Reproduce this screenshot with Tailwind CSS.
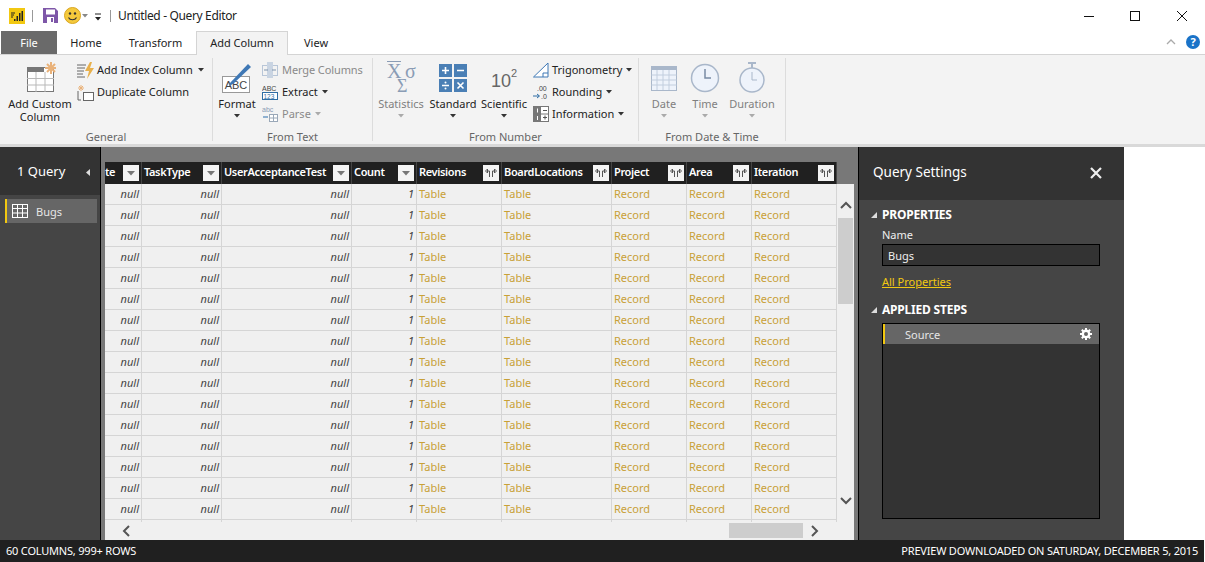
<!DOCTYPE html>
<html lang="en">
<head>
  <meta charset="UTF-8" />
  <title>Untitled - Query Editor</title>
  <script src="https://cdn.jsdelivr.net/npm/@tailwindcss/browser@4"></script>
</head>
<body class="bg-white text-[#222] font-['Noto_Sans',sans-serif] text-[11px] overflow-hidden">
  <div class="w-[1205px] h-[562px] flex flex-col overflow-hidden">

    <!-- Title bar -->
    <div class="h-[31px] flex items-center shrink-0">
      <svg class="ml-[9px]" width="16" height="16" viewBox="0 0 16 16"><rect width="16" height="16" fill="#f2c811"/><path d="M5 11h1.500v2H5zM7.500 8H9v5H7.500zM10 5h1.500v8H10zM12.500 3H14v10h-1.500z" fill="#222"/><path d="M2 5h4M2 7h3M2 9h2" stroke="#222"/></svg>
      <div class="ml-[7px] w-px h-[12px] bg-[#999]"></div>
      <svg class="ml-[10px]" width="15" height="15" viewBox="0 0 15 15"><path d="M0 0h12l3 3v12H0z" fill="#7e57a8"/><rect x="3" y="1.500" width="9" height="5" fill="#fff"/><rect x="4" y="9" width="7" height="6" fill="#fff"/><rect x="8" y="10" width="2" height="4" fill="#7e57a8"/></svg>
      <svg class="ml-[6px]" width="17" height="17" viewBox="0 0 17 17"><circle cx="8.500" cy="8.500" r="8" fill="#f4c93c" stroke="#d9a520"/><circle cx="6" cy="6.500" r="1.200" fill="#333"/><circle cx="11" cy="6.500" r="1.200" fill="#333"/><path d="M4.500 10.500c1.500 3 6.500 3 8 0" fill="none" stroke="#333" stroke-width="1.200"/></svg>
      <svg class="ml-px" width="6" height="4" viewBox="0 0 6 4"><path d="M0 0h6L3 3.500z" fill="#888"/></svg>
      <svg class="ml-[6px] mt-[2px]" width="8" height="8" viewBox="0 0 8 8"><path d="M1 1h6" stroke="#222"/><path d="M1 4h6L4 7.500z" fill="#222"/></svg>
      <div class="ml-[8px] w-px h-[12px] bg-[#999]"></div>
      <span class="ml-[7px] mt-[1px] text-[12px] tracking-[-0.35px]">Untitled - Query Editor</span>
      <div class="ml-auto flex items-center">
        <svg width="12" height="12" viewBox="0 0 12 12"><path d="M1 6.500h10" stroke="#111"/></svg>
        <svg class="ml-[34px]" width="12" height="12" viewBox="0 0 12 12"><rect x="1.500" y="1.500" width="9" height="9" fill="none" stroke="#111"/></svg>
        <svg class="ml-[35px] mr-[17px]" width="12" height="12" viewBox="0 0 12 12"><path d="M1 1l10 10M11 1L1 11" stroke="#111"/></svg>
      </div>
    </div>

    <!-- Tabs -->
    <div class="h-[24px] flex items-stretch shrink-0 pl-px border-b border-[#d4d4d4] text-[11px]">
      <div class="w-[56px] h-[23px] pt-[1px] bg-[#6a6a6a] text-white flex items-center justify-center">File</div>
      <div class="w-[58px] pt-[1px] flex items-center justify-center">Home</div>
      <div class="w-[81px] pt-[1px] flex items-center justify-center">Transform</div>
      <div class="w-[92px] h-[24px] bg-[#f3f3f3] border border-b-0 border-[#d4d4d4] flex items-center justify-center">Add Column</div>
      <div class="w-[56px] pt-[1px] flex items-center justify-center">View</div>
      <div class="ml-auto flex items-center pb-[1px] pr-[5px]">
        <svg width="10" height="6" viewBox="0 0 10 6"><path d="M1 5l4-4 4 4" fill="none" stroke="#aaa" stroke-width="1.300"/></svg>
        <div class="ml-[10px] w-[14px] h-[14px] rounded-full bg-[#1a73c8] text-white font-bold text-[11px] leading-[14px] text-center">?</div>
      </div>
    </div>

    <!-- Ribbon -->
    <div class="h-[92px] bg-[#f3f3f3] border-b-[3px] border-[#d9d9d9] flex shrink-0">
      <!-- General -->
      <div class="w-[213px] flex flex-col my-[3px] border-r border-[#dcdcdc]">
        <div class="h-[69px] shrink-0 flex">
          <div class="w-[70px] ml-[5px] flex flex-col items-center pt-[3px]">
            <svg width="32" height="32" viewBox="0 0 32 32"><rect x="3.500" y="6.500" width="26" height="24" fill="#fff" stroke="#777"/><rect x="3" y="6" width="17" height="5" fill="#777"/><path d="M3 17.500h27M3 24h27M12 11v20M21 11v20" stroke="#b9b9b9"/><g stroke="#e9b27a" stroke-width="2"><path d="M27 1v12M21 7h12M23 3l8 8M31 3l-8 8"/></g></svg>
            <div class="mt-[4px] text-center leading-[13px]">Add Custom<br>Column</div>
          </div>
          <div class="ml-[2px] flex flex-col">
            <div class="mt-[1px] h-[22px] flex items-center">
              <svg width="17" height="17" viewBox="0 0 17 17"><path d="M0 3h9M0 6h8M0 9h7M0 12h6M0 15h8" stroke="#666"/><path d="M13 0L8 9h4l-2 8 7-11h-4l2-6z" fill="#e8b04c"/></svg>
              <span class="ml-[3px]">Add Index Column</span>
              <svg class="ml-[5px]" width="6" height="4" viewBox="0 0 6 4"><path d="M0 0h6L3 3.500z" fill="#333"/></svg>
            </div>
            <div class="h-[22px] flex items-center">
              <svg width="17" height="17" viewBox="0 0 17 17"><path d="M1 7v9h3" fill="none" stroke="#666"/><rect x="6.500" y="8.500" width="10" height="8" fill="#fff" stroke="#666"/><g stroke="#e9b27a"><path d="M4 1v6M1 4h6M2 2l4 4M6 2L2 6"/></g></svg>
              <span class="ml-[3px]">Duplicate Column</span>
            </div>
          </div>
        </div>
        <div class="mt-[3px] text-center text-[#666] leading-[14px]">General</div>
      </div>

      <!-- From Text -->
      <div class="w-[160px] flex flex-col my-[3px] border-r border-[#dcdcdc]">
        <div class="h-[69px] shrink-0 flex">
          <div class="w-[48px] flex flex-col items-center pt-[3px]">
            <svg width="32" height="32" viewBox="0 0 32 32"><rect x="1.500" y="15.500" width="27" height="16" fill="#fff" stroke="#999"/><text x="15" y="28" text-anchor="middle" font-size="11" fill="#444" font-family="Liberation Sans">ABC</text><path d="M9 22L27 3l3 3-18 17-4 2z" fill="#3f78b5"/></svg>
            <div class="mt-[4px] leading-[13px]">Format</div>
            <svg class="mt-[4px]" width="6" height="4" viewBox="0 0 6 4"><path d="M0 0h6L3 3.500z" fill="#333"/></svg>
          </div>
          <div class="ml-[1px] flex flex-col">
            <div class="mt-[1px] h-[22px] flex items-center text-[#8a8a8a]">
              <svg width="16" height="16" viewBox="0 0 16 16"><rect x=".5" y="3.500" width="15" height="10" fill="none" stroke="#b8c6d8"/><rect x="5" y="0" width="6" height="16" fill="#c9d4e2"/><path d="M2 8h4M14 8h-4" stroke="#7f94ad"/></svg>
              <span class="ml-[4px] tracking-[-0.1px]">Merge Columns</span>
            </div>
            <div class="h-[22px] flex items-center">
              <svg width="16" height="16" viewBox="0 0 16 16"><text x="0" y="7" font-size="7" fill="#444" font-family="Liberation Sans">ABC</text><rect x="0.500" y="8.500" width="15" height="7" fill="#fff" stroke="#2e6da4"/><text x="1.500" y="14.500" font-size="6.500" fill="#2e6da4" font-family="Liberation Sans">123</text></svg>
              <span class="ml-[4px]">Extract</span>
              <svg class="ml-[4px]" width="6" height="4" viewBox="0 0 6 4"><path d="M0 0h6L3 3.500z" fill="#333"/></svg>
            </div>
            <div class="h-[22px] flex items-center text-[#8a8a8a]">
              <svg width="16" height="16" viewBox="0 0 16 16"><text x="0" y="6" font-size="7" fill="#8a9cb5" font-family="Liberation Sans">abc</text><path d="M1 11h5" stroke="#8fb0d0" stroke-width="2"/><rect x="7.500" y="8.500" width="8" height="7" fill="#fff" stroke="#9aa8b8"/><path d="M7.500 12h8M11.500 8.500v7" stroke="#9aa8b8"/></svg>
              <span class="ml-[4px]">Parse</span>
              <svg class="ml-[4px]" width="6" height="4" viewBox="0 0 6 4"><path d="M0 0h6L3 3.500z" fill="#aaa"/></svg>
            </div>
          </div>
        </div>
        <div class="mt-[3px] text-center text-[#666] leading-[14px]">From Text</div>
      </div>

      <!-- From Number -->
      <div class="w-[266px] flex flex-col my-[3px] border-r border-[#dcdcdc]">
        <div class="h-[69px] shrink-0 flex">
          <div class="w-[52px] ml-[2px] flex flex-col items-center pt-[3px] text-[#7f7f7f]">
            <div class="w-[32px] h-[32px] relative font-['Liberation_Serif',serif] text-[#8a9cb5]">
              <div class="absolute left-[2px] top-0 w-[14px] h-px bg-[#8a9cb5]"></div>
              <span class="absolute left-[2px] top-[2px] text-[20px] leading-[16px]">X</span>
              <span class="absolute left-[20px] top-[3px] text-[20px] leading-[15px]">σ</span>
              <span class="absolute left-[12px] top-[19px] text-[18px] leading-[13px]">Σ</span>
            </div>
            <div class="mt-[4px] leading-[13px]">Statistics</div>
            <svg class="mt-[4px]" width="6" height="4" viewBox="0 0 6 4"><path d="M0 0h6L3 3.500z" fill="#aaa"/></svg>
          </div>
          <div class="w-[52px] flex flex-col items-center pt-[3px]">
            <svg width="32" height="32" viewBox="0 0 32 32"><g fill="#4a7fb5"><rect x="2" y="3" width="13" height="13"/><rect x="17" y="3" width="13" height="13"/><rect x="2" y="18" width="13" height="13"/><rect x="17" y="18" width="13" height="13"/></g><path d="M5 9.500h7M8.500 6v7M20 9.500h7M5 24.500h7M20.500 21.500l6 6M26.500 21.500l-6 6" stroke="#fff" stroke-width="1.600"/><circle cx="8.500" cy="21.500" r="1" fill="#fff"/><circle cx="8.500" cy="27.500" r="1" fill="#fff"/></svg>
            <div class="mt-[4px] leading-[13px]">Standard</div>
            <svg class="mt-[4px]" width="6" height="4" viewBox="0 0 6 4"><path d="M0 0h6L3 3.500z" fill="#333"/></svg>
          </div>
          <div class="w-[50px] flex flex-col items-center pt-[3px]">
            <div class="w-[32px] h-[32px] relative text-[#666] font-['Liberation_Sans',sans-serif]">
              <span class="absolute left-[3px] top-[10px] text-[18px] leading-[20px]">10</span><span class="absolute left-[23px] top-[6px] text-[11px] leading-[12px]">2</span>
            </div>
            <div class="mt-[4px] leading-[13px]">Scientific</div>
            <svg class="mt-[4px]" width="6" height="4" viewBox="0 0 6 4"><path d="M0 0h6L3 3.500z" fill="#333"/></svg>
          </div>
          <div class="ml-[4px] flex flex-col">
            <div class="mt-[1px] h-[22px] flex items-center">
              <svg width="16" height="16" viewBox="0 0 16 16"><path d="M.5 15L15 1v14z" fill="#fff" stroke="#3f78b5"/><path d="M10 15v-4h5" fill="none" stroke="#3f78b5"/></svg>
              <span class="ml-[3px]">Trigonometry</span>
              <svg class="ml-[4px]" width="6" height="4" viewBox="0 0 6 4"><path d="M0 0h6L3 3.500z" fill="#333"/></svg>
            </div>
            <div class="h-[22px] flex items-center">
              <svg width="16" height="16" viewBox="0 0 16 16"><text x="4" y="7" font-size="7" fill="#444" font-family="Liberation Sans">.00</text><text x="8" y="15" font-size="7" fill="#444" font-family="Liberation Sans">.0</text><path d="M0 12h6M4 10l2.500 2L4 14" fill="none" stroke="#2e6da4"/></svg>
              <span class="ml-[3px]">Rounding</span>
              <svg class="ml-[4px]" width="6" height="4" viewBox="0 0 6 4"><path d="M0 0h6L3 3.500z" fill="#333"/></svg>
            </div>
            <div class="h-[22px] flex items-center">
              <svg width="16" height="16" viewBox="0 0 16 16"><rect x=".5" y=".5" width="15" height="15" fill="#fff" stroke="#777"/><rect x="1" y="1" width="7" height="14" fill="#777"/><path d="M0 8h16" stroke="#777"/><path d="M10 4.500h4M10 11.500h4M12 9.500v4" stroke="#555"/><path d="M4.500 2.500v4M4.500 10v4" stroke="#fff"/></svg>
              <span class="ml-[3px]">Information</span>
              <svg class="ml-[4px]" width="6" height="4" viewBox="0 0 6 4"><path d="M0 0h6L3 3.500z" fill="#333"/></svg>
            </div>
          </div>
        </div>
        <div class="mt-[3px] text-center text-[#666] leading-[14px]">From Number</div>
      </div>

      <!-- From Date & Time -->
      <div class="w-[147px] flex flex-col my-[3px] border-r border-[#dcdcdc] text-[#7f7f7f]">
        <div class="h-[69px] shrink-0 flex">
          <div class="w-[50px] flex flex-col items-center pt-[3px]">
            <svg width="30" height="32" viewBox="0 0 30 32"><rect x="2.500" y="5.500" width="25" height="24" fill="#eef3fb" stroke="#a9b7ca"/><rect x="2" y="5" width="26" height="4" fill="#a9b7ca"/><path d="M2.500 14h25M2.500 19h25M2.500 24h25M8 9v20M14 9v20M20 9v20" stroke="#c2cede"/></svg>
            <div class="mt-[4px] leading-[13px]">Date</div>
            <svg class="mt-[4px]" width="6" height="4" viewBox="0 0 6 4"><path d="M0 0h6L3 3.500z" fill="#aaa"/></svg>
          </div>
          <div class="w-[32px] flex flex-col items-center pt-[3px]">
            <svg width="30" height="32" viewBox="0 0 30 32"><circle cx="15" cy="17" r="13.500" fill="#eef3fb" stroke="#a9b7ca" stroke-width="1.500"/><path d="M15 8v9h6" fill="none" stroke="#7a8ca5" stroke-width="1.500"/></svg>
            <div class="mt-[4px] leading-[13px]">Time</div>
            <svg class="mt-[4px]" width="6" height="4" viewBox="0 0 6 4"><path d="M0 0h6L3 3.500z" fill="#aaa"/></svg>
          </div>
          <div class="w-[62px] flex flex-col items-center pt-[3px]">
            <svg width="30" height="32" viewBox="0 0 30 32"><path d="M11 2h8M15 2v5" stroke="#a9b7ca" stroke-width="2"/><circle cx="15" cy="19" r="12" fill="#eef3fb" stroke="#a9b7ca" stroke-width="1.500"/><path d="M15 11v8h5" fill="none" stroke="#a9b7ca"/></svg>
            <div class="mt-[4px] leading-[13px]">Duration</div>
            <svg class="mt-[4px]" width="6" height="4" viewBox="0 0 6 4"><path d="M0 0h6L3 3.500z" fill="#aaa"/></svg>
          </div>
        </div>
        <div class="mt-[3px] text-center text-[#666] leading-[14px]">From Date &amp; Time</div>
      </div>
    </div>

    <!-- Main -->
    <div class="flex-1 flex min-h-0">
      <!-- Queries pane -->
      <div class="w-[100px] bg-[#454545] text-white flex flex-col">
        <div class="h-[48px] pt-[2px] bg-[#333] flex items-center pl-[17px] shrink-0">
          <span class="text-[13px]">1 Query</span>
          <svg class="ml-[21px]" width="5" height="7" viewBox="0 0 5 7"><path d="M4 0v7L0 3.500z" fill="#ddd"/></svg>
        </div>
        <div class="mt-[4px] ml-[5px] w-[92px] h-[24px] bg-[#666] border-l-2 border-[#f2c811] flex items-center pl-[5px]">
          <svg width="16" height="14" viewBox="0 0 16 14"><rect x=".5" y=".5" width="15" height="13" fill="none" stroke="#fff"/><path d="M0 4.500h16M0 9h16M5.500 1v13M10.500 1v13" stroke="#fff"/></svg>
          <span class="ml-[8px] mt-[2px] text-[#e6e6e6]">Bugs</span>
        </div>
      </div>
      <div class="w-px bg-black"></div>

      <!-- Data grid -->
      <div class="w-[757px] bg-[#787878] flex flex-col pt-[15px] px-[4px]">
        <div id="head" class="w-[732px] h-[22px] shrink-0 bg-[#202020] text-white font-semibold tracking-[-0.35px] grid grid-cols-[37px_80px_130px_65px_85px_110px_75px_65px_85px]"></div>
        <div class="flex-1 min-h-0 bg-[#f0f0f0] flex flex-col">
          <div class="flex-1 min-h-0 flex">
            <div id="rows" class="w-[732px]"></div>
            <div class="w-[17px] flex flex-col items-center">
              <svg class="mt-[17px]" width="12" height="8" viewBox="0 0 12 8"><path d="M1 7l5-5 5 5" fill="none" stroke="#555" stroke-width="2"/></svg>
              <div class="mt-[9px] w-[15px] h-[86px] bg-[#cdcdcd]"></div>
              <svg class="mt-auto mb-[17px]" width="12" height="8" viewBox="0 0 12 8"><path d="M1 1l5 5 5-5" fill="none" stroke="#555" stroke-width="2"/></svg>
            </div>
          </div>
          <div class="h-[18px] shrink-0 flex items-center pb-[1px]">
            <svg class="ml-[16px]" width="10" height="12" viewBox="0 0 10 12"><path d="M8 1L3 6l5 5" fill="none" stroke="#555" stroke-width="2"/></svg>
            <div class="ml-[598px] w-[74px] h-[15px] bg-[#cdcdcd]"></div>
            <svg class="ml-[7px]" width="10" height="12" viewBox="0 0 10 12"><path d="M2 1l5 5-5 5" fill="none" stroke="#555" stroke-width="2"/></svg>
          </div>
        </div>
      </div>
      <div class="w-px bg-black"></div>

      <!-- Query settings -->
      <div class="w-[265px] bg-[#454545] text-white flex flex-col">
        <div class="h-[53px] pb-[2px] bg-[#333] flex items-center justify-between pl-[14px] pr-[22px] shrink-0">
          <span class="text-[13.500px]">Query Settings</span>
          <svg width="12" height="12" viewBox="0 0 12 12"><path d="M1 1l10 10M11 1L1 11" stroke="#eee" stroke-width="2.200"/></svg>
        </div>
        <div class="pl-[12px] mt-[6px] h-[18px] flex items-center font-bold text-[12px] tracking-[-0.2px]">
          <svg width="6" height="6" viewBox="0 0 6 6"><path d="M6 0v6H0z" fill="#ddd"/></svg>
          <span class="ml-[5px]">PROPERTIES</span>
        </div>
        <div class="ml-[23px] mt-[3px] leading-[16px] text-[#eee]">Name</div>
        <div class="ml-[23px] mt-[1px] w-[218px] h-[22px] pt-[2px] bg-[#333] border border-black flex items-center pl-[5px] text-[#eee]">Bugs</div>
        <a class="ml-[23px] mt-[8px] leading-[16px] text-[#f2c811] underline">All Properties</a>
        <div class="pl-[12px] mt-[11px] h-[18px] flex items-center font-bold text-[12px] tracking-[-0.2px]">
          <svg width="6" height="6" viewBox="0 0 6 6"><path d="M6 0v6H0z" fill="#ddd"/></svg>
          <span class="ml-[5px]">APPLIED STEPS</span>
        </div>
        <div class="ml-[23px] mt-[4px] w-[218px] h-[196px] bg-[#333] border border-black">
          <div class="h-[20px] bg-[#666] border-l-2 border-[#f2c811] flex items-center pl-[20px] pr-[7px] justify-between text-[#e6e6e6]">
            <span class="mt-[2px]">Source</span>
            <svg width="12" height="12" viewBox="0 0 12 12"><circle cx="6" cy="6" r="3.200" fill="none" stroke="#fff" stroke-width="2.400"/><path d="M6 0v3M6 9v3M0 6h3M9 6h3M1.800 1.800l2 2M8.200 8.200l2 2M10.200 1.800l-2 2M3.800 8.200l-2 2" stroke="#fff" stroke-width="2"/></svg>
          </div>
        </div>
      </div>
      <div class="flex-1 bg-white"></div>
    </div>

    <!-- Status bar -->
    <div class="h-[22px] w-[1204px] bg-[#202020] text-white flex items-center justify-between px-[6px] shrink-0 tracking-[-0.2px]">
      <span>60 COLUMNS, 999+ ROWS</span>
      <span>PREVIEW DOWNLOADED ON SATURDAY, DECEMBER 5, 2015</span>
    </div>
  </div>

  <script>
    const filterBtn = '<svg class="shrink-0" width="16" height="16" viewBox="0 0 16 16"><rect width="16" height="16" fill="#f4f4f4"/><path d="M4 6h8L8 10.500z" fill="#777"/></svg>';
    const expandBtn = '<svg class="shrink-0" width="16" height="16" viewBox="0 0 16 16"><rect width="16" height="16" fill="#f4f4f4"/><path d="M6.500 12V6H4.500M2.500 6l2-2v4zM9.500 12V6h2M13.500 6l-2-2v4z" fill="none" stroke="#555"/></svg>';
    const columns = [
      ['te', filterBtn], ['TaskType', filterBtn], ['UserAcceptanceTest', filterBtn], ['Count', filterBtn],
      ['Revisions', expandBtn], ['BoardLocations', expandBtn], ['Project', expandBtn], ['Area', expandBtn], ['Iteration', expandBtn]
    ];

    document.getElementById('head').innerHTML = columns.map(([name, btn], i) => `
      <div class="flex items-center justify-between ${i ? 'pl-[2px]' : ''} pr-[2px] border-r border-[#444]">
        <span class="-mt-[1px]">${name}</span>${btn}
      </div>`).join('');

    const nullCell = '<div class="pr-[2px] text-right italic text-[#444] border-r border-[#d5d5d5]">null</div>';
    const oneCell = '<div class="pr-[2px] text-right italic text-[#444] border-r border-[#d5d5d5]">1</div>';
    const link = (t) => `<div class="pl-[2px] text-[#c8a037] border-r border-[#d5d5d5]">${t}</div>`;
    const row = '<div class="h-[21px] leading-[20px] grid grid-cols-[37px_80px_130px_65px_85px_110px_75px_65px_85px] border-b border-[#d5d5d5]">'
      + nullCell + nullCell + nullCell + oneCell + link('Table') + link('Table') + link('Record') + link('Record') + link('Record') + '</div>';
    // stub below the last full row: only the column lines show
    const tick = '<div class="border-r border-[#d5d5d5]"></div>';
    const stub = '<div class="h-[2px] grid grid-cols-[37px_80px_130px_65px_85px_110px_75px_65px_85px]">' + tick.repeat(9) + '</div>';
    document.getElementById('rows').innerHTML = row.repeat(16) + stub;
  </script>
</body>
</html>
